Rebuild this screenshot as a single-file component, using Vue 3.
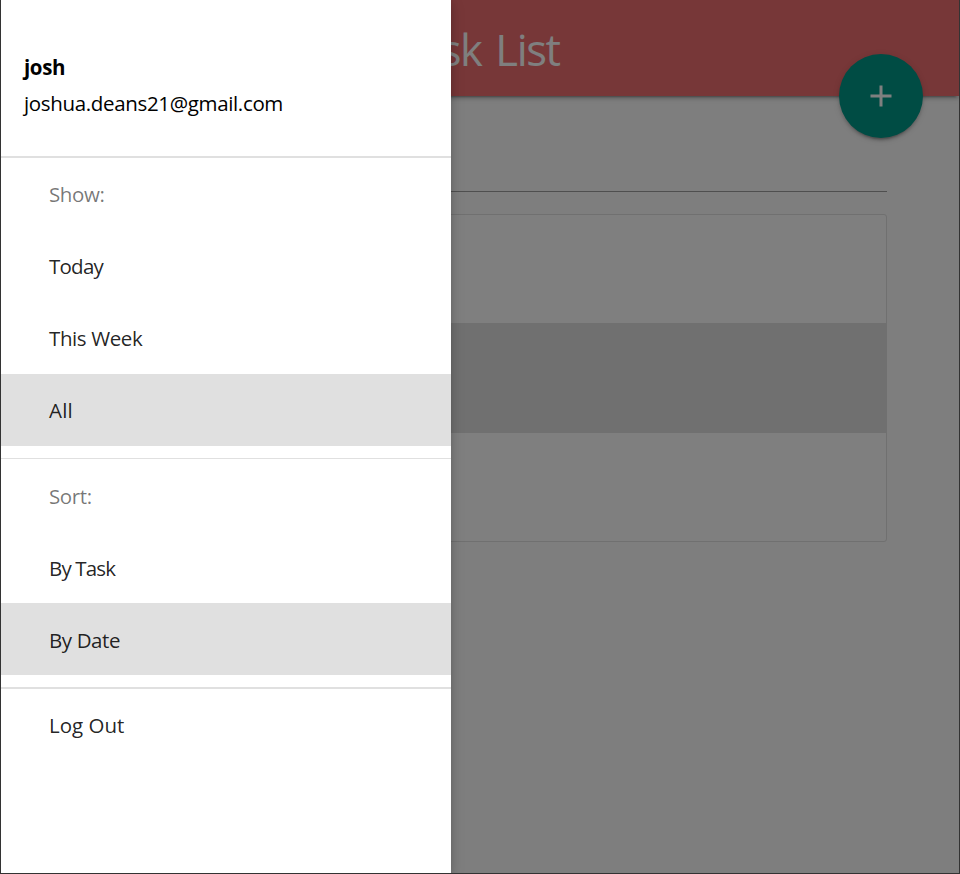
<script setup>
const groups = [
  {
    label: 'Show:',
    rule: 'thick',
    items: [
      { text: 'Today', cls: 'today' },
      { text: 'This Week', cls: 'week' },
      { text: 'All', cls: 'all', active: true },
    ],
  },
  {
    label: 'Sort:',
    rule: 'thin',
    items: [
      { text: 'By Task', cls: 'task' },
      { text: 'By Date', cls: 'date', active: true },
    ],
  },
]
const tasks = [{ id: 1 }, { id: 2, active: true }, { id: 3 }]
</script>

<template>
  <div class="window">
    <header class="navbar">
      <h1>Task List</h1>
      <button class="fab" aria-label="Add">
        <svg viewBox="0 0 24 24" width="36" height="36">
          <path d="M19 13h-6v6h-2v-6H5v-2h6V5h2v6h6v2z" />
        </svg>
      </button>
    </header>
    <main class="content">
      <div class="field"></div>
      <ul class="collection">
        <li v-for="t in tasks" :key="t.id" :class="{ active: t.active }"></li>
      </ul>
    </main>
    <div class="overlay"></div>
    <nav class="sidenav">
      <div class="user">
        <strong>josh</strong>
        <div class="email">joshua.deans21@gmail.com</div>
      </div>
      <section v-for="g in groups" :key="g.label" :class="['group', g.rule]">
        <div class="row label">{{ g.label }}</div>
        <a v-for="i in g.items" :key="i.text" :class="['row', i.cls, { active: i.active }]">{{ i.text }}</a>
      </section>
      <section class="group thick">
        <a class="row logout">Log Out</a>
      </section>
    </nav>
  </div>
</template>

<style>
body {
  margin: 0;
  background: #fff;
}
</style>

<style scoped>
* {
  box-sizing: border-box;
}
.window {
  position: relative;
  width: 960px;
  height: 874px;
  overflow: hidden;
  border: 1px solid #333;
  border-top: 0;
  background: #fcfcfc;
  font-family: "Segoe UI", "Open Sans", sans-serif;
  font-size: 20.5px;
  letter-spacing: -0.4px;
}
.navbar {
  position: relative;
  height: 96px;
  background: #ee6e70;
  box-shadow: 0 3px 3px 0 rgba(0, 0, 0, 0.14), 0 1.5px 7.5px 0 rgba(0, 0, 0, 0.12), 0 4.5px 1.5px -3px rgba(0, 0, 0, 0.2);
}
h1 {
  margin: 0;
  padding: 2px 5px 0 0;
  font-size: 43.5px;
  font-weight: 400;
  line-height: 96px;
  letter-spacing: -1.4px;
  word-spacing: 4px;
  text-align: center;
  color: #fff;
}
.fab {
  position: absolute;
  top: 54px;
  right: 36px;
  display: flex;
  align-items: center;
  justify-content: center;
  width: 84px;
  height: 84px;
  padding: 0;
  border: 0;
  border-radius: 50%;
  background: #009888;
  box-shadow: 0 3px 3px 0 rgba(0, 0, 0, 0.14), 0 1.5px 7.5px 0 rgba(0, 0, 0, 0.12), 0 4.5px 1.5px -3px rgba(0, 0, 0, 0.2);
}
.fab svg {
  fill: #fff;
}
.content {
  width: 814px;
  margin: 0 auto;
}
.field {
  height: 96px;
  border-bottom: 1px solid #9e9e9e;
}
.collection {
  margin: 22px 0 0;
  padding: 0;
  overflow: hidden;
  list-style: none;
  border: 1px solid #e0e0e0;
  border-radius: 3px;
  background: #fff;
}
.collection li {
  height: 108px;
}
.collection li.active {
  height: 110px;
  background: #e0e0e0;
}
.overlay {
  position: absolute;
  inset: 0;
  background: rgba(0, 0, 0, 0.5);
}
.sidenav {
  position: absolute;
  top: 0;
  left: 0;
  width: 450px;
  height: 100%;
  background: #fff;
  color: rgba(0, 0, 0, 0.87);
  box-shadow: 0 3px 7.5px 0 rgba(0, 0, 0, 0.16), 0 3px 15px 0 rgba(0, 0, 0, 0.12);
}
.user {
  height: 156px;
  padding: 49px 24px 0 23px;
  line-height: 36px;
  color: #000;
}
.user strong {
  display: block;
}
.email {
  letter-spacing: -0.34px;
}
.group.thick {
  border-top: 2px solid #e0e0e0;
}
.group.thin {
  border-top: 1px solid #e0e0e0;
}
.group:not(:last-child) {
  padding-bottom: 12px;
}
.row {
  display: block;
  height: 72px;
  padding-left: 48px;
  line-height: 72px;
}
.thin .row {
  line-height: 74px;
}
.label {
  color: rgba(0, 0, 0, 0.54);
}
.today {
  letter-spacing: -0.75px;
}
.all {
  letter-spacing: 0.2px;
}
.task {
  letter-spacing: -0.85px;
}
.logout {
  letter-spacing: 0;
}
.row.active {
  background: #e0e0e0;
}
</style>
